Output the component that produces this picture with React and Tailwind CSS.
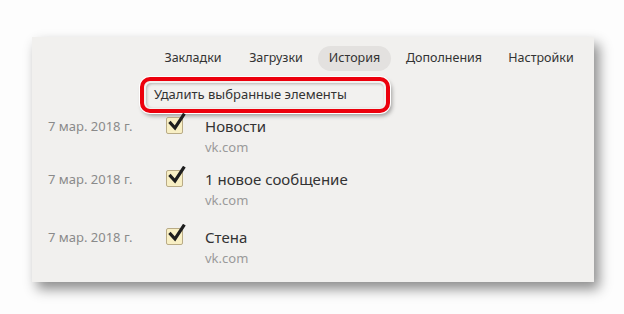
import React from "react";

const Check = () => (
  <div className="w-[17px] h-[17px] rounded-[2px] border border-[#b9ab86] bg-[#f8efc4] relative">
    <svg className="absolute left-[1px] top-[-5px]" width="18" height="19" viewBox="0 0 18 19">
      <path d="M2.5 10 L7 15 L15.5 2" fill="none" stroke="#1e1e1e" strokeWidth="3.2" strokeLinecap="square" strokeLinejoin="miter" />
    </svg>
  </div>
);

const Row = ({ title, mt }) => (
  <div className={`flex items-start ${mt}`}>
    <div className="w-[134px] pl-[16px] text-[13px] leading-[18px] text-[#8a8a8a] pt-[1px]">7 мар. 2018 г.</div>
    <div className="w-[39px] pt-[1px]"><Check /></div>
    <div className="flex flex-col">
      <div className="text-[15px] leading-[20px] text-[#333]">{title}</div>
      <div className="text-[13px] leading-[18px] text-[#9a9a9a] mt-[2px]">vk.com</div>
    </div>
  </div>
);

export default function App() {
  return (
    <div className="w-[624px] h-[314px] bg-[#fdfdfd] pt-[37px] pl-[32px]" style={{ fontFamily: '"Noto Sans", "Open Sans", sans-serif' }}>
      <div className="w-[562px] h-[245px] bg-[#f1f0ee] shadow-[5px_7px_12px_rgba(0,0,0,0.45)] flex flex-col">
        <div className="flex items-center h-[26px] mt-[8px] pl-[120px] text-[12.5px] text-[#333]">
          <span className="w-[82px] flex justify-center">Закладки</span>
          <span className="w-[84px] flex justify-center">Загрузки</span>
          <span className="w-[73px] h-[25px] rounded-full bg-[#e3e1df] flex items-center justify-center">История</span>
          <span className="w-[106px] flex justify-center">Дополнения</span>
          <span className="w-[88px] flex justify-center">Настройки</span>
        </div>
        <div className="ml-[108px] mt-[6px] w-[250px] h-[36px] rounded-[10px] border-[4px] border-[#ec000c] bg-[#f2f1ef] shadow-[0_0_0_1px_#ffffff,2px_3px_4px_rgba(0,0,0,0.35)] flex items-center">
          <div className="ml-[2px] w-[238px] h-[25px] rounded-[5px] shadow-[inset_1px_1px_3px_rgba(0,0,0,0.25)] flex items-center pl-[8px] text-[13px] text-[#333]">
            Удалить выбранные элементы
          </div>
        </div>
        <Row title="Новости" mt="mt-[3px]" />
        <Row title="1 новое сообщение" mt="mt-[13px]" />
        <Row title="Стена" mt="mt-[18px]" />
      </div>
    </div>
  );
}
